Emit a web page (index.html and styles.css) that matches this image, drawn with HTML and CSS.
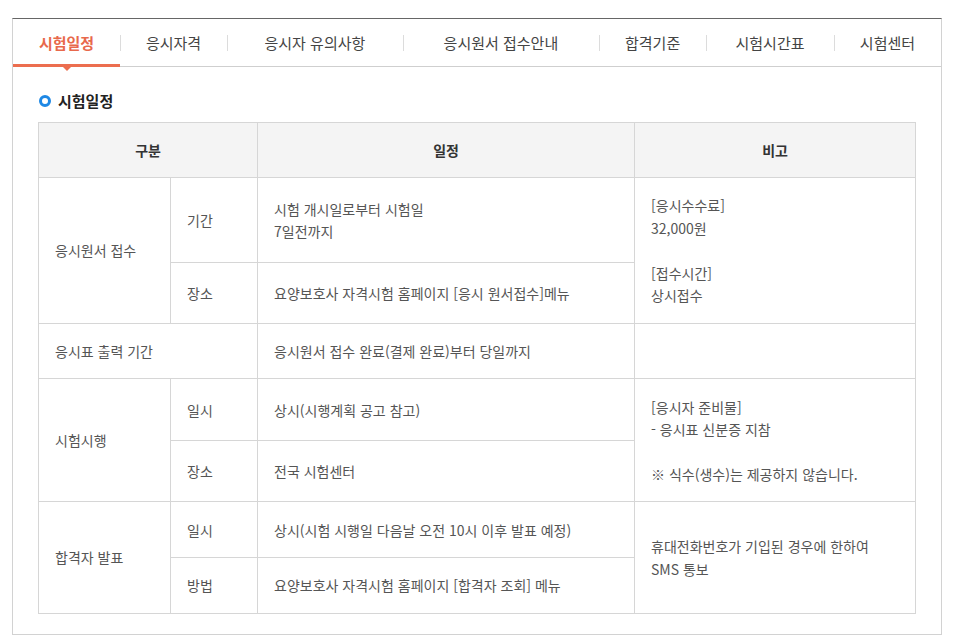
FILE: index.html
```html
<!DOCTYPE html>
<html lang="ko">
<head>
<meta charset="utf-8">
<title>시험일정</title>
<link rel="stylesheet" href="styles.css">
</head>
<body>
<div class="panel">
  <ul class="tabs">
    <li class="tab active"><span>시험일정</span></li>
    <li class="tab"><span>응시자격</span></li>
    <li class="tab"><span>응시자 유의사항</span></li>
    <li class="tab"><span>응시원서 접수안내</span></li>
    <li class="tab"><span>합격기준</span></li>
    <li class="tab"><span>시험시간표</span></li>
    <li class="tab"><span>시험센터</span></li>
  </ul>
  <div class="content">
    <h2 class="section-title"><span class="ring"></span>시험일정</h2>
    <table class="schedule">
      <colgroup>
        <col class="c1"><col class="c2"><col class="c3"><col class="c4">
      </colgroup>
      <thead>
        <tr class="head">
          <th colspan="2">구분</th>
          <th>일정</th>
          <th>비고</th>
        </tr>
      </thead>
      <tbody>
        <tr class="r-a1">
          <td rowspan="2">응시원서 접수</td>
          <td>기간</td>
          <td>시험 개시일로부터 시험일<br>7일전까지</td>
          <td rowspan="2">[응시수수료]<br>32,000원<br><br>[접수시간]<br>상시접수</td>
        </tr>
        <tr class="r-a2">
          <td>장소</td>
          <td>요양보호사 자격시험 홈페이지 [응시 원서접수]메뉴</td>
        </tr>
        <tr class="r-b">
          <td colspan="2">응시표 출력 기간</td>
          <td>응시원서 접수 완료(결제 완료)부터 당일까지</td>
          <td></td>
        </tr>
        <tr class="r-c1">
          <td rowspan="2">시험시행</td>
          <td>일시</td>
          <td>상시(시행계획 공고 참고)</td>
          <td rowspan="2">[응시자 준비물]<br>- 응시표 신분증 지참<br><br>※ 식수(생수)는 제공하지 않습니다.</td>
        </tr>
        <tr class="r-c2">
          <td>장소</td>
          <td>전국 시험센터</td>
        </tr>
        <tr class="r-d1">
          <td rowspan="2">합격자 발표</td>
          <td>일시</td>
          <td>상시(시험 시행일 다음날 오전 10시 이후 발표 예정)</td>
          <td rowspan="2">휴대전화번호가 기입된 경우에 한하여<br>SMS 통보</td>
        </tr>
        <tr class="r-d2">
          <td>방법</td>
          <td>요양보호사 자격시험 홈페이지 [합격자 조회] 메뉴</td>
        </tr>
      </tbody>
    </table>
  </div>
</div>
</body>
</html>
```

FILE: styles.css
```css
* { box-sizing: border-box; }
html, body { margin: 0; padding: 0; background: #fff; }
body {
  font-family: "Noto Sans CJK KR", "Noto Sans", sans-serif;
  color: #555;
}
.panel {
  width: 930px;
  margin: 18px 0 0 12px;
  border: 1px solid #d2d2d2;
  border-top: 1px solid #666;
}
.tabs {
  display: table;
  width: 100%;
  margin: 0;
  padding: 0;
  list-style: none;
  border-bottom: 1px solid #cfcfcf;
  table-layout: auto;
}
.tab {
  display: table-cell;
  position: relative;
  height: 47px;
  padding: 0 8px;
  text-align: center;
  vertical-align: middle;
  font-size: 15px;
  color: #444;
  white-space: nowrap;
}
.tab + .tab::before {
  content: "";
  position: absolute;
  left: 0;
  top: 16px;
  width: 1px;
  height: 16px;
  background: #dcdcdc;
}
.tab.active { color: #e8694c; font-weight: 700; }
.tab.active::after {
  content: "";
  position: absolute;
  left: 0;
  right: 0;
  bottom: -1px;
  height: 3px;
  background: #ec6e4f;
}
.tab.active span::after {
  content: "";
  position: absolute;
  left: 50%;
  bottom: -5px;
  margin-left: -4px;
  border-left: 4px solid transparent;
  border-right: 4px solid transparent;
  border-top: 4px solid #ec6e4f;
}
.content { padding: 23px 25px 20px 25px; }
.section-title {
  display: flex;
  align-items: center;
  gap: 7px;
  margin: 0 0 10px 0;
  font-size: 15px;
  line-height: 22px;
  font-weight: 700;
  color: #222;
}
.ring {
  width: 12px;
  height: 12px;
  border: 3px solid #1e88e5;
  border-radius: 50%;
  margin-left: 1px;
}
.schedule {
  width: 877px;
  border-collapse: collapse;
  table-layout: fixed;
  font-size: 14px;
  line-height: 22.4px;
}
.c1 { width: 132px; }
.c2 { width: 87px; }
.c3 { width: 377px; }
.c4 { width: 281px; }
.schedule th, .schedule td {
  border: 1px solid #d6d6d6;
  padding: 16px 16px;
  text-align: left;
  vertical-align: middle;
  font-weight: 400;
}
.schedule th {
  padding: 15px 16px;
  background: #f4f4f4;
  color: #333;
  font-weight: 700;
  text-align: center;
}
.head th { height: 55px; }
.r-a1 td { height: 85px; }
.r-a2 td { height: 61px; }
.r-b td { height: 55px; }
.r-c1 td { height: 62px; }
.r-c2 td { height: 61px; }
.r-d1 td { height: 56px; }
.r-d2 td { height: 55px; }
```
